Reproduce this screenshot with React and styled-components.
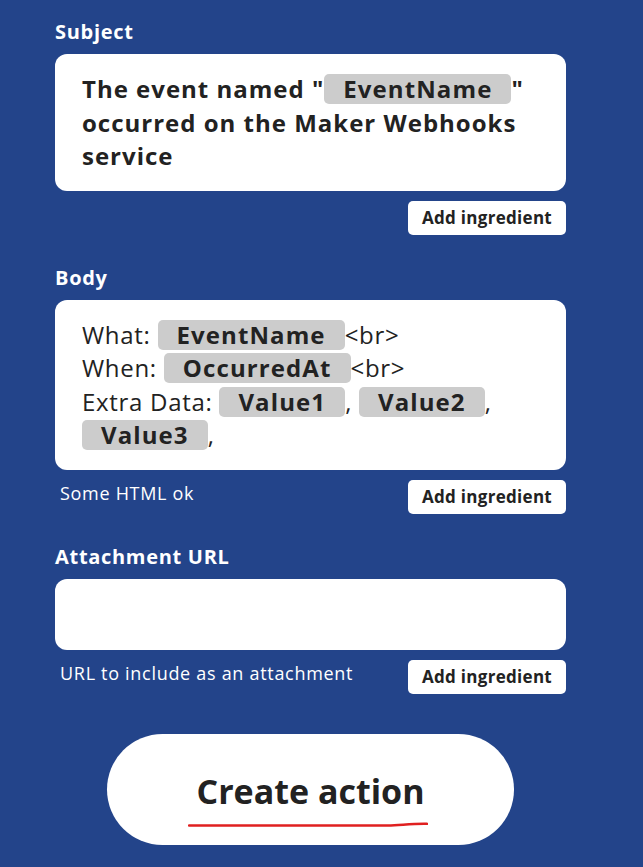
import React from "react";
import styled, { createGlobalStyle } from "styled-components";

const GlobalStyle = createGlobalStyle`
  html, body {
    margin: 0;
    padding: 0;
    background: #23448a;
  }
  body {
    font-family: "Open Sans", "Noto Sans", sans-serif;
    color: #222;
  }
`;

const fields = [
  {
    label: "Subject",
    bold: true,
    render: () => (
      <>
        The event named "<Ingredient>EventName</Ingredient>" occurred on the
        Maker Webhooks service
      </>
    ),
  },
  {
    label: "Body",
    hint: "Some HTML ok",
    render: () => (
      <>
        What: <Ingredient>EventName</Ingredient>
        {"<br>"}
        <br />
        When: <Ingredient>OccurredAt</Ingredient>
        {"<br>"}
        <br />
        Extra Data: <Ingredient>Value1</Ingredient>,{" "}
        <Ingredient>Value2</Ingredient>, <Ingredient>Value3</Ingredient>,
      </>
    ),
  },
  {
    label: "Attachment URL",
    hint: "URL to include as an attachment",
    render: () => null,
  },
];

const App = () => {
  return (
    <Page>
      <GlobalStyle />
      {fields.map((field) => (
        <Field key={field.label}>
          <Label>{field.label}</Label>
          <TextBox $bold={field.bold}>{field.render()}</TextBox>
          <Footer>
            <Hint>{field.hint}</Hint>
            <AddButton>Add ingredient</AddButton>
          </Footer>
        </Field>
      ))}
      <SubmitRow>
        <CreateButton>
          Create action
          <Scribble viewBox="0 0 240 8" preserveAspectRatio="none">
            <path
              d="M1 5.5 L 200 5.5 C 212 5.5, 222 3.5, 239 3.8"
              fill="none"
              stroke="#e02020"
              strokeWidth="2.5"
              strokeLinecap="round"
            />
          </Scribble>
        </CreateButton>
      </SubmitRow>
    </Page>
  );
};

const Page = styled.div`
  width: 511px;
  padding: 20px 0 22px 55px;
`;

const Field = styled.div`
  display: flex;
  flex-direction: column;
  margin-bottom: 31px;
`;

const Label = styled.div`
  color: #fff;
  font-weight: 700;
  font-size: 20px;
  letter-spacing: 0.7px;
  line-height: 24px;
  margin-bottom: 10px;
`;

const TextBox = styled.div`
  background: #fff;
  border-radius: 12px;
  padding: 18px 27px;
  min-height: 35px;
  font-size: 24px;
  line-height: 33.5px;
  letter-spacing: ${(p) => (p.$bold ? "1px" : "0.7px")};
  font-weight: ${(p) => (p.$bold ? 700 : 500)};
  color: #222;
`;

const Ingredient = styled.span`
  display: inline-block;
  background: #cccccc;
  border-radius: 5px;
  padding: 0 19px;
  line-height: 30px;
  font-weight: 700;
  letter-spacing: 1.1px;
`;

const Footer = styled.div`
  display: flex;
  justify-content: space-between;
  align-items: center;
  margin-top: 10px;
`;

const Hint = styled.span`
  color: #fff;
  font-size: 18px;
  letter-spacing: 0.7px;
  padding-left: 5px;
  margin-bottom: 7px;
`;

const AddButton = styled.button`
  background: #fff;
  border: none;
  border-radius: 5px;
  height: 34px;
  width: 158px;
  font-family: inherit;
  font-weight: 700;
  font-size: 17px;
  letter-spacing: 0.3px;
  color: #222;
  padding: 0;
`;

const SubmitRow = styled.div`
  display: flex;
  justify-content: center;
  margin-top: 40px;
`;

const CreateButton = styled.button`
  position: relative;
  width: 407px;
  height: 111px;
  border: none;
  border-radius: 56px;
  background: #fff;
  font-family: inherit;
  font-weight: 700;
  font-size: 34px;
  color: #222;
  padding: 4px 0 0;
`;

const Scribble = styled.svg`
  position: absolute;
  left: 81px;
  top: 86px;
  width: 240px;
  height: 8px;
`;

export default App;
